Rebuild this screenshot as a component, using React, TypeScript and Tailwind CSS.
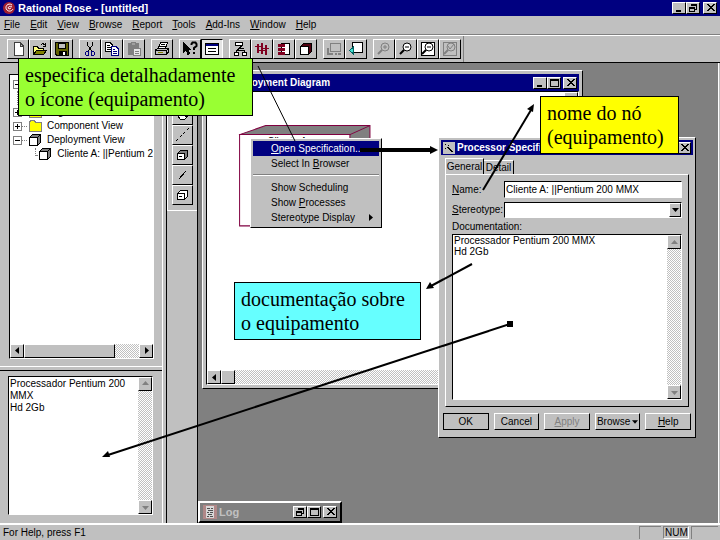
import type { ReactNode } from 'react'

const raised = 'border border-t-white border-l-white border-r-black border-b-black bg-[#c0c0c0]'
const sunken = 'border border-t-black border-l-black border-r-white border-b-white bg-white'
const track =
  'bg-[repeating-conic-gradient(#ffffff_0_25%,#c0c0c0_0_50%)] bg-[length:2px_2px]'

// "&File" -> underlined F
const Mnemonic = ({ text }: { text: string }) => {
  const i = text.indexOf('&')
  if (i < 0) return <span>{text}</span>
  return (
    <span className="whitespace-pre">
      {text.slice(0, i)}
      <u>{text[i + 1]}</u>
      {text.slice(i + 2)}
    </span>
  )
}

const Icon = ({ children }: { children: ReactNode }) => (
  <svg
    viewBox="0 0 16 16"
    className="h-4 w-4 shrink-0"
    fill="none"
    stroke="#000"
    shapeRendering="crispEdges"
    aria-hidden="true"
  >
    {children}
  </svg>
)

const cube = (
  <Icon>
    <path d="M2.5 5.5L5.5 2.5H13.5V10.5L10.5 13.5Z" fill="#808080" />
    <path d="M2.5 5.5H10.5V13.5H2.5Z" fill="#fff" />
    <path d="M10.5 5.5L13.5 2.5" />
  </Icon>
)

const folder = (
  <Icon>
    <path d="M2 4.5L4 2.5H7L9 4.5H14V13.5H2Z" fill="#ffff00" stroke="#808080" />
  </Icon>
)

const magnifier = (sign: ReactNode, color = '#000') => (
  <g shapeRendering="auto" stroke={color}>
    <circle cx="9" cy="6" r="4" fill={color === '#000' ? '#fff' : 'none'} />
    <path d="M6 9L2 13" strokeWidth="2" />
    {sign}
  </g>
)

type Tool = { label: string; icon: ReactNode; pressed?: boolean; disabled?: boolean }

const toolGroups: Tool[][] = [
  [
    {
      label: 'New',
      icon: <path d="M4 1.5H10L13.5 5V14.5H4ZM10 1.5V5H13.5" fill="#fff" stroke="#404040" />,
    },
    {
      label: 'Open',
      icon: (
        <>
          <path d="M1.5 13.5V5.5H5L6.5 7H11.5V9" fill="#ffff80" />
          <path d="M1.5 13.5L4.5 9.5H14.5L11.5 13.5Z" fill="#808000" />
          <path d="M9 3.5L11 2.5L13.5 4.5M13.5 2V5H11" />
        </>
      ),
    },
    {
      label: 'Save',
      icon: (
        <>
          <path d="M1.5 1.5H14.5V14.5H3L1.5 13Z" fill="#606000" />
          <path d="M4.5 2H11.5V7.5H4.5Z" fill="#c0c0c0" />
          <path d="M5 10H12V14H5Z" fill="#000" />
          <path d="M9 11H11V14H9Z" fill="#fff" stroke="none" />
        </>
      ),
    },
  ],
  [
    {
      label: 'Cut',
      icon: (
        <>
          <path d="M5.5 1V4L9.5 10M10.5 1V4L6.5 10" />
          <path d="M4.5 10.5H6.5V14.5H4.5L3.5 13V12ZM9.5 10.5H11.5L12.5 12V13L11.5 14.5H9.5Z" stroke="#000080" />
        </>
      ),
    },
    {
      label: 'Copy',
      icon: (
        <>
          <path d="M1.5 1.5H6L8.5 4V10.5H1.5Z" fill="#fff" />
          <path d="M3 4.5H6M3 6.5H7M3 8.5H7" />
          <path d="M7.5 5.5H12L14.5 8V14.5H7.5Z" fill="#fff" stroke="#000080" />
          <path d="M9 8.5H11M9 10.5H13M9 12.5H13" stroke="#000080" />
        </>
      ),
    },
    {
      label: 'Paste',
      disabled: true,
      icon: (
        <>
          <path d="M2 2.5H12V13.5H2Z" fill="#808080" stroke="#808080" />
          <path d="M5 1.5H9V4H5Z" fill="#a0a0a0" stroke="#808080" />
          <path d="M7.5 7.5H14.5V14.5H7.5Z" fill="#e8e8e8" stroke="#808080" />
          <path d="M9 10.5H13M9 12.5H13" stroke="#808080" />
        </>
      ),
    },
  ],
  [
    {
      label: 'Print',
      icon: (
        <>
          <path d="M4.5 7L6.5 1.5H13.5L11.5 7" fill="#fff" />
          <path d="M7 3.5H11M6 5.5H11" />
          <path d="M1.5 9L3.5 7.5H14.5V11L12.5 13.5H1.5Z" fill="#c0c0c0" />
          <path d="M1.5 9.5H12.5V13.5M12.5 9.5L14.5 7.5" />
          <path d="M4 11.5H9" stroke="#808000" />
        </>
      ),
    },
  ],
  [
    {
      label: 'Context help',
      icon: (
        <>
          <path d="M1.5 1.5V11L4 9L6 13.5L7.5 12.5L5.5 8.5H8.5Z" fill="#000" />
          <path d="M9.5 4V3L10.5 1.5H13.5L14.5 3V5L12 7V9M12 11V13" strokeWidth="2" shapeRendering="auto" />
        </>
      ),
    },
    {
      label: 'View documentation',
      pressed: true,
      icon: (
        <>
          <path d="M1.5 2.5H14.5V13.5H1.5Z" fill="#fff" />
          <path d="M2 4H14" strokeWidth="2" stroke="#000080" />
          <path d="M4 7.5H12M4 10.5H12" />
        </>
      ),
    },
  ],
  [
    {
      label: 'Browse class diagram',
      icon: (
        <>
          <path d="M3.5 1.5H10.5V4.5H3.5ZM2.5 11.5H6.5V14.5H2.5ZM10.5 11.5H14.5V14.5H10.5Z" fill="#fff" />
          <path d="M9.5 5L5.5 9H12.5V11M5 9L4.5 11M7 7.5H12" />
        </>
      ),
    },
    {
      label: 'Browse interaction diagram',
      icon: (
        <>
          <path d="M3.5 3V12M7.5 2V13M11.5 4V14" stroke="#800020" strokeWidth="2" />
          <path d="M1 5.5H8M3 9.5H12M8 7.5H15" stroke="#800020" />
        </>
      ),
    },
    {
      label: 'Browse component diagram',
      icon: (
        <>
          <path d="M5.5 2.5H13.5V13.5H5.5Z" fill="#fff" />
          <path d="M2 3H8V5H2ZM2 7H8V9H2ZM2 11H8V13H2Z" fill="#800020" stroke="#800020" />
        </>
      ),
    },
    {
      label: 'Browse deployment diagram',
      icon: (
        <>
          <path d="M2.5 5.5L5.5 2.5H13.5V10.5L10.5 13.5Z" fill="#500010" />
          <path d="M2.5 5.5H10.5V13.5H2.5Z" fill="#fff" />
        </>
      ),
    },
  ],
  [
    {
      label: 'Browse parent',
      disabled: true,
      icon: (
        <>
          <path d="M4.5 2.5H14.5V10.5H4.5Z" stroke="#808080" />
          <path d="M2 7V13H7M9 13H11M12 13H15" stroke="#808080" strokeWidth="2" />
        </>
      ),
    },
    {
      label: 'Browse previous diagram',
      icon: (
        <>
          <path d="M4.5 1.5H14.5V11.5H4.5Z" fill="#fff" />
          <path d="M1.5 9.5L5.5 6V13Z" fill="#40e0d0" stroke="#006060" />
        </>
      ),
    },
  ],
  [
    {
      label: 'Zoom in',
      disabled: true,
      icon: magnifier(<path d="M7 6H11M9 4V8" />, '#808080'),
    },
    { label: 'Zoom out', icon: magnifier(<path d="M7 6H11" />) },
    {
      label: 'Fit in window',
      icon: (
        <>
          <path d="M1.5 1.5H14.5V14.5H1.5Z" fill="#fff" />
          {magnifier(<path d="M7 6H11" />)}
        </>
      ),
    },
    {
      label: 'Undo fit in window',
      disabled: true,
      icon: (
        <>
          <path d="M1.5 1.5H14.5V14.5H1.5Z" stroke="#808080" />
          {magnifier(<path d="M6 5L8 8L12 3" />, '#808080')}
        </>
      ),
    },
  ],
]

const toolbox: Tool[] = [
  { label: 'Selection tool', icon: <path d="M5 2V12L8 9H12Z" fill="#000" /> },
  { label: 'Text', icon: <path d="M4 3.5H12M8 4V13" /> },
  {
    label: 'Note',
    icon: (
      <>
        <path d="M3.5 5.5L6.5 3.5H12.5V9L9.5 12.5H5.5L3.5 10Z" fill="#fff" />
        <path d="M6 6.5H10V10" />
      </>
    ),
  },
  {
    label: 'Anchor note to item',
    icon: <path d="M1 14L14 1" strokeDasharray="3 2" />,
  },
  {
    label: 'Processor',
    icon: (
      <>
        <path d="M2.5 6.5L5.5 3.5H12.5V9.5L9.5 12.5Z" fill="#808080" />
        <path d="M2.5 6.5H9.5V12.5H2.5Z" fill="#fff" />
        <path d="M4 9.5H7" />
      </>
    ),
  },
  { label: 'Connection', icon: <path d="M4 12L11 4" /> },
  {
    label: 'Device',
    icon: (
      <>
        <path d="M2.5 6.5L5.5 3.5H12.5V9.5L9.5 12.5Z" fill="#fff" />
        <path d="M2.5 6.5H9.5V12.5H2.5Z" fill="#fff" />
        <path d="M4 9.5H7" />
      </>
    ),
  },
]

const menus = ['&File', '&Edit', '&View', '&Browse', '&Report', '&Tools', '&Add-Ins', '&Window', '&Help']

const glyphs = {
  minimize: <path d="M2 7.5H7" strokeWidth="2" />,
  maximize: <path d="M1.5 1.5H9.5V8.5H1.5ZM1 2.5H10" />,
  restore: <path d="M3.5 3V1.5H8.5V6.5H7M3 2.5H9M1.5 4.5H6.5V8.5H1.5ZM1 5.5H7" />,
  close: <path d="M2 1L9 8M3 1L10 8M9 1L2 8M10 1L3 8" />,
}

const CaptionButton = ({ kind }: { kind: keyof typeof glyphs }) => (
  <button aria-label={kind} className={`flex h-3 w-[14px] items-center justify-center ${raised}`}>
    <svg viewBox="0 0 11 10" className="h-[10px] w-[11px]" fill="none" stroke="#000" shapeRendering="crispEdges">
      {glyphs[kind]}
    </svg>
  </button>
)

const arrows = {
  up: { d: 'M1 6H8L4.5 2Z', name: 'Scroll up' },
  down: { d: 'M1 3H8L4.5 7Z', name: 'Scroll down' },
  left: { d: 'M6 1V8L2 4.5Z', name: 'Scroll left' },
  right: { d: 'M3 1V8L7 4.5Z', name: 'Scroll right' },
}

const ScrollButton = ({ dir, muted }: { dir: keyof typeof arrows; muted?: boolean }) => (
  <button
    aria-label={arrows[dir].name}
    className={`flex h-[14px] w-[14px] shrink-0 items-center justify-center ${raised}`}
  >
    <svg viewBox="0 0 9 9" className="h-[9px] w-[9px]" fill={muted ? '#808080' : '#000'}>
      <path d={arrows[dir].d} />
    </svg>
  </button>
)

const VScroll = () => (
  <div className={`flex w-[14px] shrink-0 flex-col justify-between ${track}`}>
    <ScrollButton dir="up" muted />
    <ScrollButton dir="down" muted />
  </div>
)

const ToolButton = ({ tool }: { tool: Tool }) => (
  <button
    aria-label={tool.label}
    disabled={tool.disabled}
    className={`flex h-5 w-[22px] items-center justify-center ${
      tool.pressed
        ? 'border border-t-black border-l-black border-r-white border-b-white bg-[#e4e4e4]'
        : raised
    }`}
  >
    <Icon>{tool.icon}</Icon>
  </button>
)

const Expander = ({ open }: { open?: boolean }) => (
  <svg viewBox="0 0 9 9" className="h-[9px] w-[9px] shrink-0" fill="#fff" shapeRendering="crispEdges">
    <path d="M0.5 0.5H8.5V8.5H0.5Z" stroke="#808080" />
    <path d={open ? 'M2 4.5H7' : 'M2 4.5H7M4.5 2V7'} stroke="#000" />
  </svg>
)

const TreeRow = ({ icon, label, open }: { icon: ReactNode; label?: string; open?: boolean }) => (
  <li className="flex h-[14px] items-center">
    <Expander open={open} />
    <span className="w-[5px] border-t border-dotted border-[#808080]" />
    {icon}
    {label && <span className="pl-1 whitespace-nowrap">{label}</span>}
  </li>
)

const Browser = () => (
  <section className="flex min-h-0 flex-1 flex-col border-b border-white pt-[11px] pr-2 pb-[7px] pl-[9px]">
    <div className={`flex min-h-0 flex-1 flex-col ${sunken}`}>
      <ul className="min-h-0 flex-1 overflow-hidden pt-[2px] pl-[3px]">
        <TreeRow icon={folder} open />
        <li className="ml-1 h-[14px] border-l border-dotted border-[#808080]" />
        <TreeRow icon={folder} label="Logical View" />
        <TreeRow icon={folder} label="Component View" />
        <TreeRow icon={cube} label="Deployment View" open />
        <li className="flex h-[14px] items-center pl-[22px]">
          <span className="mb-1 h-2 w-[9px] border-b border-l border-dotted border-[#808080]" />
          {cube}
          <span className="pl-1 whitespace-nowrap">Cliente A: ||Pentium 2</span>
        </li>
      </ul>
      <div className={`flex ${track}`}>
        <ScrollButton dir="left" />
        <div className={`w-[91px] ${raised}`} />
        <div className="flex-1" />
        <ScrollButton dir="right" />
      </div>
    </div>
  </section>
)

const DocumentationPane = () => (
  <section className="h-1/3 border-t border-black pt-[5px] pr-[9px] pb-2 pl-2">
    <div className={`flex h-full ${sunken}`}>
      <textarea
        aria-label="Documentation window"
        className="min-w-0 flex-1 resize-none overflow-hidden px-px pt-px leading-3 outline-none"
        defaultValue={'Processador Pentium 200\nMMX\nHd 2Gb'}
      />
      <VScroll />
    </div>
  </section>
)

const DiagramWindow = () => (
  <div className={`absolute top-[7px] left-1 flex h-[319px] w-[381px] flex-col p-[3px] ${raised}`}>
    <div className="flex h-[17px] items-center bg-[#000080] pr-[2px] pl-6 text-white">
      <span className="flex-1 font-bold">Deployment Diagram</span>
      <CaptionButton kind="minimize" />
      <CaptionButton kind="maximize" />
      <span className="w-[2px]" />
      <CaptionButton kind="close" />
    </div>
    <div className={`flex min-h-0 flex-1 flex-col ${sunken}`}>
      <div className="flex min-h-0 flex-1">
        <svg viewBox="0 0 356 280" className="min-w-0 flex-1" preserveAspectRatio="xMinYMin slice">
          <path d="M32.5 42.5L58.5 33.5H162.5V124L142.5 134Z" fill="#808080" stroke="#800040" />
          <path d="M32.5 42.5H142.5V133.5H32.5Z" fill="#fff" stroke="#800040" />
          <path d="M142.5 42.5L162.5 33.5" stroke="#800040" />
          <text x="60" y="53" fontSize="10" fill="#000">
            Cliente A
          </text>
        </svg>
        <VScroll />
      </div>
      <div className={`flex ${track}`}>
        <ScrollButton dir="left" />
        <div className={`w-[14px] ${raised}`} />
        <div className="flex-1" />
        <ScrollButton dir="right" />
      </div>
    </div>
  </div>
)

const ContextMenu = () => (
  <div className={`absolute top-[75px] left-[52px] w-[132px] p-[2px] ${raised}`}>
    {['&Open Specification...', 'Select In &Browser'].map((item, i) => (
      <button
        key={item}
        className={`block h-[15px] w-full pl-[18px] text-left leading-[15px] ${i === 0 ? 'bg-[#000080] text-white' : ''}`}
      >
        <Mnemonic text={item} />
      </button>
    ))}
    <hr className="mt-[3px] mb-1 border-t border-b border-t-[#808080] border-b-white" />
    <button className="block h-[15px] w-full pl-[18px] text-left leading-[15px]">Show Scheduling</button>
    <button className="block h-[15px] w-full pl-[18px] text-left leading-[15px]">
      <Mnemonic text="Show &Processes" />
    </button>
    <button className="flex h-[15px] w-full items-center justify-between pr-[6px] pl-[18px]">
      <Mnemonic text="Stereot&ype Display" />
      <svg viewBox="0 0 4 7" className="h-[7px] w-1">
        <path d="M0 0V7L4 3.5Z" />
      </svg>
    </button>
  </div>
)

const dialogButton = `flex h-[17px] flex-1 items-center justify-center ${raised}`

const SpecificationDialog = () => (
  <div className={`absolute top-[74px] left-[240px] flex h-[301px] w-[258px] flex-col p-[2px] ${raised}`}>
    <div className="flex h-[15px] items-center bg-[#000080] px-[2px] text-white">
      <svg viewBox="0 0 12 12" className="h-3 w-3 bg-[#c0c0c0]" stroke="#000" shapeRendering="crispEdges">
        <path d="M2 2H3M2 6H3M5 3H6M4 5L9 10M5 5L10 10" />
      </svg>
      <span className="flex-1 pl-[2px] font-bold">Processor Specification</span>
      <CaptionButton kind="close" />
    </div>
    <div className="flex items-end px-1 pt-[3px]" role="tablist">
      <button
        role="tab"
        aria-selected="true"
        className="h-4 w-[39px] border-t border-r border-l border-t-white border-r-black border-l-white"
      >
        General
      </button>
      <button role="tab" aria-selected="false" className="h-[14px] w-[30px] border-t border-r border-t-white border-r-black">
        Detail
      </button>
    </div>
    <div className={`mx-1 flex min-h-0 flex-1 flex-col p-[6px] ${raised}`}>
      <div className="flex items-center">
        <label htmlFor="name" className="w-[52px]">
          <Mnemonic text="&Name:" />
        </label>
        <input
          id="name"
          className={`h-[17px] min-w-0 flex-1 px-px outline-none ${sunken}`}
          defaultValue="Cliente A: ||Pentium 200 MMX"
        />
      </div>
      <div className="mt-1 flex items-center">
        <label htmlFor="stereotype" className="w-[52px]">
          <Mnemonic text="&Stereotype:" />
        </label>
        <div className={`relative h-4 min-w-0 flex-1 ${sunken}`}>
          <select id="stereotype" className="h-full w-full appearance-none outline-none">
            <option></option>
          </select>
          <span
            className={`pointer-events-none absolute top-0 right-0 flex h-[14px] w-3 items-center justify-center ${raised}`}
          >
            <svg viewBox="0 0 7 4" className="h-1 w-[7px]">
              <path d="M0 0H7L3.5 4Z" />
            </svg>
          </span>
        </div>
      </div>
      <label htmlFor="documentation" className="mt-[2px] leading-[14px]">
        Documentation:
      </label>
      <div className={`flex min-h-0 flex-1 ${sunken}`}>
        <textarea
          id="documentation"
          className="min-w-0 flex-1 resize-none overflow-hidden px-px leading-[11px] outline-none"
          defaultValue={'Processador Pentium 200 MMX\nHd 2Gb'}
        />
        <VScroll />
      </div>
    </div>
    <div className="flex gap-[5px] px-[2px] pt-[6px] pb-[5px]">
      <button className={`${dialogButton} outline outline-1 -outline-offset-1 outline-black`}>OK</button>
      <button className={dialogButton}>Cancel</button>
      <button className={`${dialogButton} text-[#808080]`} disabled>
        <Mnemonic text="&Apply" />
      </button>
      <button className={`${dialogButton} gap-[2px]`}>
        Browse
        <svg viewBox="0 0 7 4" className="h-1 w-[6px]">
          <path d="M0 0H7L3.5 4Z" />
        </svg>
      </button>
      <button className={dialogButton}>
        <Mnemonic text="&Help" />
      </button>
    </div>
  </div>
)

const LogWindow = () => (
  <div className="absolute bottom-0 left-0 flex h-[22px] w-[144px] items-center border-2 border-t-white border-r-black border-b-black border-l-white bg-[#808080] px-[3px]">
    <svg viewBox="0 0 14 14" className="h-[14px] w-[14px]" shapeRendering="crispEdges">
      <path d="M0 0H14V14H0Z" fill="#b08888" />
      <path d="M3 1H11V13H3Z" fill="#d8d8d8" />
      <path d="M4 3H7M8 3H10M5 5H10M4 7H6M7 7H10M5 9H9M4 11H6M7 11H10" stroke="#505050" />
    </svg>
    <span className="flex-1 pl-[2px] text-[11px] font-bold text-[#c0c0c0]">Log</span>
    <CaptionButton kind="restore" />
    <CaptionButton kind="maximize" />
    <span className="w-[2px]" />
    <CaptionButton kind="close" />
  </div>
)

const calloutText =
  "absolute border border-black py-1 pl-[6px] font-['Liberation_Serif',serif] text-[20px] leading-6 whitespace-nowrap"

const Annotations = () => (
  <>
    <p className={`${calloutText} top-[58px] left-[18px] w-[235px] bg-[#99ff33]`}>
      especifica detalhadamente
      <br />o ícone (equipamento)
    </p>
    <p className={`${calloutText} top-[96px] left-[540px] w-[139px] bg-[#ffff00]`}>
      nome do nó
      <br />
      (equipamento)
    </p>
    <p className={`${calloutText} top-[282px] left-[234px] w-[187px] bg-[#66ffff]`}>
      documentação sobre
      <br />o equipamento
    </p>
    <svg
      viewBox="0 0 720 540"
      className="pointer-events-none absolute top-0 left-0 h-[540px] w-[720px]"
      stroke="#000"
      strokeWidth="2"
    >
      <path d="M258 66L295 141" strokeWidth="1" />
      <path d="M360 150H430" strokeWidth="4" />
      <path d="M430 146L438 150L430 154Z" stroke="none" />
      <path d="M483 190L531 110" />
      <path d="M534 104L533 112L527 109Z" stroke="none" />
      <path d="M472 264L431 286" />
      <path d="M426 289L430 282L434 288Z" stroke="none" />
      <path d="M510 324L108 455" />
      <path d="M102 457L108 451L110 457Z" stroke="none" />
      <path d="M507 321H513V327H507Z" stroke="none" />
    </svg>
  </>
)

const App = () => (
  <div className="relative flex h-screen flex-col overflow-hidden bg-[#c0c0c0] font-['Liberation_Sans',Arial,sans-serif] text-[10px] leading-3 text-black">
    <header className="flex h-4 items-center bg-[#000080] pr-[3px] pl-[3px] text-white">
      <svg viewBox="0 0 12 12" className="h-3 w-3" fill="none">
        <circle cx="6" cy="6" r="6" fill="#a02030" />
        <path d="M9 3C5 0 1 5 4 8C6 10 9 9 10 7M9 5C6 3 4 6 6 7L8 6" stroke="#fff" />
      </svg>
      <h1 className="flex-1 pl-[3px] text-[11px] font-bold">Rational Rose - [untitled]</h1>
      <CaptionButton kind="minimize" />
      <CaptionButton kind="restore" />
      <span className="w-[3px]" />
      <CaptionButton kind="close" />
    </header>
    <nav className="flex h-[19px] items-center gap-[10px] border-b border-[#808080] pl-1">
      {menus.map((menu) => (
        <button key={menu}>
          <Mnemonic text={menu} />
        </button>
      ))}
    </nav>
    <div className="flex h-[27px] items-center border-t border-white">
      <div className="flex h-full items-center gap-[6px] border-r border-[#808080] pr-[2px] pl-[7px]">
        {toolGroups.map((group) => (
          <div key={group[0].label} className="flex">
            {group.map((tool) => (
              <ToolButton key={tool.label} tool={tool} />
            ))}
          </div>
        ))}
      </div>
    </div>
    <main className="flex min-h-0 flex-1 border-t border-black">
      <aside className="flex w-[163px] shrink-0 flex-col border-r border-white">
        <Browser />
        <div className="h-[3px]" />
        <DocumentationPane />
      </aside>
      <div className="ml-[3px] w-8 border-r border-l border-black">
        <div className="flex flex-col border-b border-l border-white px-1 pt-[2px] pb-[5px]">
          {toolbox.map((tool) => (
            <button key={tool.label} aria-label={tool.label} className={`flex h-5 w-[21px] items-center justify-center ${raised}`}>
              <Icon>{tool.icon}</Icon>
            </button>
          ))}
        </div>
      </div>
      <div className="relative min-w-0 flex-1 overflow-hidden bg-[#808080]">
        <DiagramWindow />
        <ContextMenu />
        <SpecificationDialog />
        <LogWindow />
      </div>
      <div className="w-[2px] border-l border-white" />
    </main>
    <footer className="flex h-[17px] items-center gap-[2px] border-t-2 border-white pr-[2px] pl-[3px]">
      <span className="flex-1">For Help, press F1</span>
      <span className="h-[13px] w-[22px] border-t border-l border-[#808080]" />
      <span className="h-[13px] w-[26px] border border-t-[#808080] border-r-white border-b-white border-l-[#808080] pl-px">
        NUM
      </span>
      <span className="h-[13px] w-[27px] border-t border-l border-[#808080]" />
    </footer>
    <Annotations />
  </div>
)

export default App
